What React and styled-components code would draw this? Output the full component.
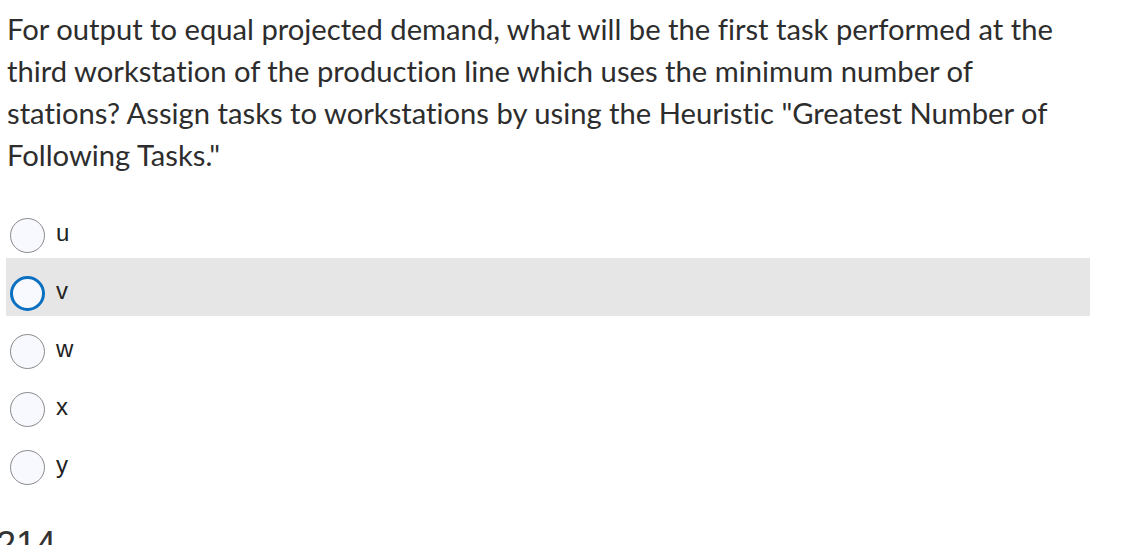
import React from "react";
import styled, { createGlobalStyle } from "styled-components";

const Global = createGlobalStyle`
  html, body { margin: 0; padding: 0; background: #ffffff; overflow: hidden; }
  body { font-family: Lato, "Liberation Sans", sans-serif; }
`;

const Page = styled.div`
  width: 1139px;
  height: 545px;
  overflow: hidden;
  display: flex;
  flex-direction: column;
`;

const Question = styled.p`
  margin: 0;
  padding: 8px 0 0 7px;
  width: 1060px;
  font-family: Lato, "Open Sans", sans-serif;
  font-size: 29.2px;
  line-height: 42px;
  color: #2d2d2d;
  font-variant-ligatures: none;
`;

const Options = styled.div`
  margin-top: 24px;
  display: flex;
  flex-direction: column;
  width: 1084px;
  margin-left: 6px;
`;

const Row = styled.label`
  height: 58px;
  box-sizing: border-box;
  padding-top: 12px;
  display: flex;
  align-items: center;
  gap: 11px;
  background: ${(p) => (p.$active ? "#e6e6e6" : "transparent")};
`;

const Radio = styled.span`
  margin-left: 4px;
  width: 35px;
  height: 35px;
  box-sizing: border-box;
  border-radius: 50%;
  background: #f7f9fe;
  border: ${(p) => (p.$focused ? "3px solid #0b70c2" : "1px solid #8a8a8a")};
`;

const Label = styled.span`
  font-family: "Liberation Sans", Arial, sans-serif;
  font-size: 24px;
  color: #222;
  margin-top: -5px;
`;

const Next = styled.div`
  margin-top: 37px;
  margin-left: -4px;
  font-family: "Liberation Sans", Arial, sans-serif;
  font-size: 36px;
  color: #333;
  line-height: 1;
`;

const options = ["u", "v", "w", "x", "y"];

export default function App() {
  return (
    <Page>
      <Global />
      <Question>
        For output to equal projected demand, what will be the first task performed at the
        third workstation of the production line which uses the minimum number of
        stations? Assign tasks to workstations by using the Heuristic "Greatest Number of
        Following Tasks."
      </Question>
      <Options>
        {options.map((o) => (
          <Row key={o} $active={o === "v"}>
            <Radio $focused={o === "v"} />
            <Label>{o}</Label>
          </Row>
        ))}
      </Options>
      <Next>214</Next>
    </Page>
  );
}
